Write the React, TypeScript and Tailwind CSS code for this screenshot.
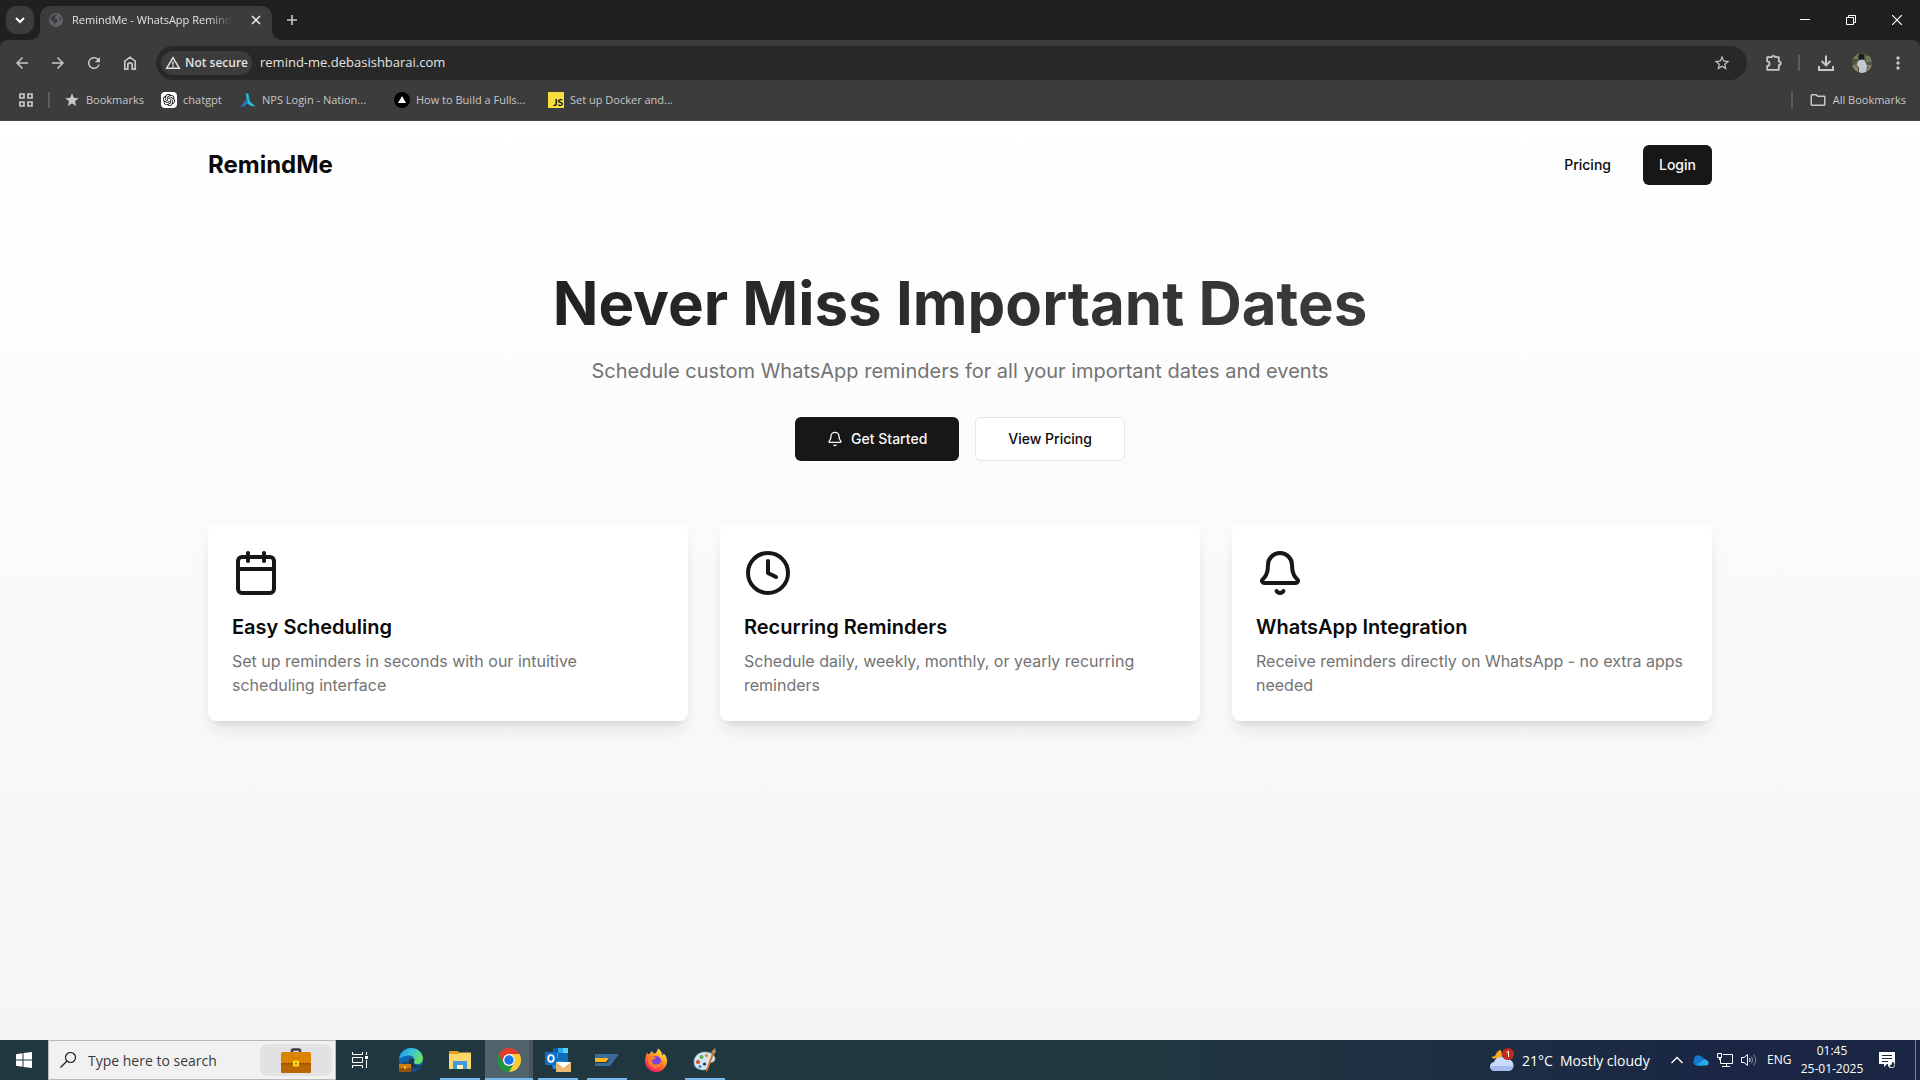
import type { ReactNode } from "react";
import { Bell, Calendar, Clock } from "lucide-react";
import {
  MdArrowBack,
  MdArrowForward,
  MdMoreVert,
  MdOutlineFolder,
  MdRefresh,
  MdStar,
  MdStarOutline,
} from "react-icons/md";
import { SiOpenai } from "react-icons/si";

const features = [
  {
    icon: Calendar,
    title: "Easy Scheduling",
    text: "Set up reminders in seconds with our intuitive scheduling interface",
  },
  {
    icon: Clock,
    title: "Recurring Reminders",
    text: "Schedule daily, weekly, monthly, or yearly recurring reminders",
  },
  {
    icon: Bell,
    title: "WhatsApp Integration",
    text: "Receive reminders directly on WhatsApp - no extra apps needed",
  },
];

/* ---------- browser icons ---------- */

const GlobeIcon = () => (
  <svg viewBox="0 0 16 16" className="size-4 shrink-0">
    <circle cx="8" cy="8" r="7" fill="#5f6368" />
    <path d="M2.4 6.2 C4 3 7 2.2 9 2.6 C8.6 4.2 7.2 4.4 7 5.6 C6.8 7 9.6 6.8 9.8 8.4 C9.8 10 7.6 9.6 7.4 11.2 C7.2 12.4 6 13 5.6 13 C6 11 5.6 9.6 4.2 9 C3 8.4 2.2 7.6 2.4 6.2Z" fill="#3c3c3c" />
    <path d="M10.8 4.4 L13 6 L13.4 8.4 L11.6 7.4Z" fill="#3c3c3c" />
  </svg>
);

const HomeIcon = () => (
  <svg viewBox="0 0 16 16" className="size-4" fill="none" stroke="currentColor" strokeWidth="1.7">
    <path d="M2.8 6.2 L8 2.2 L13.2 6.2 V14.2 H10.2 V10 A2.2 2.2 0 0 0 5.8 10 V14.2 H2.8Z" />
  </svg>
);

const WarningIcon = () => (
  <svg viewBox="0 0 16 16" className="size-4" fill="none" stroke="currentColor" strokeWidth="1.4">
    <path d="M8 2.6 L14.4 13.3 H1.6Z" />
    <path d="M8 6.4 V9.8 M8 10.6 V12" />
  </svg>
);

const PuzzleIcon = () => (
  <svg viewBox="0 0 20 20" className="size-5" fill="none" stroke="currentColor" strokeWidth="1.8" strokeLinejoin="round">
    <path d="M3.2 4.2 H7.6 A2 1.8 0 0 1 11.4 4.2 H14.8 V8.4 A1.9 1.9 0 0 1 14.8 12.2 V16.8 H3.2 V13 A2.2 2.2 0 0 0 3.2 8.4Z" />
  </svg>
);

const DownloadIcon = () => (
  <svg viewBox="0 0 20 20" className="size-5" fill="none" stroke="currentColor" strokeWidth="2">
    <path d="M10 2.5 V12 M5.6 8 L10 12.4 L14.4 8" />
    <path d="M3 13 V17 H17 V13" />
  </svg>
);

const AppsIcon = () => (
  <svg viewBox="0 0 16 16" className="size-4" fill="none" stroke="currentColor" strokeWidth="1.7">
    <path d="M2 2h4v4h-4z M10 2h4v4h-4z M2 10h4v4h-4z M10 10h4v4h-4z" />
  </svg>
);

const AvatarIcon = () => (
  <svg viewBox="0 0 20 20" className="size-5">
    <defs>
      <clipPath id="avatar">
        <circle cx="10" cy="10" r="10" />
      </clipPath>
    </defs>
    <g clipPath="url(#avatar)">
      <path d="M0 0h20v20H0z" fill="#4c5640" />
      <path d="M0 0h7v6H0z M14 3h6v6h-6z" fill="#6f7a58" />
      <path d="M0 12h6v8H0z M15 12h5v8h-5z" fill="#8b8272" />
      <path d="M6 8 Q10 5 13 8 L15 13 L14 20 H7 L7 14 L4 13Z" fill="#c3c9d3" />
      <path d="M6 3 Q9 -1 12 2 L12 6 L7 7Z" fill="#1d1a1a" />
      <path d="M3 10 L6 13 L5 15 L2 12Z M15 12 L17 15 L15 16Z" fill="#8a5f4a" />
    </g>
  </svg>
);

/* ---------- bookmarks ---------- */

const bookmarks: { label: string; width: string; icon: ReactNode }[] = [
  { label: "Bookmarks", width: "w-[59px]", icon: <MdStar className="size-4" /> },
  {
    label: "chatgpt",
    width: "w-[41px]",
    icon: (
      <span className="flex size-4 items-center justify-center rounded-sm bg-white text-black">
        <SiOpenai className="size-3" />
      </span>
    ),
  },
  {
    label: "NPS Login - Nation...",
    width: "w-[116px]",
    icon: (
      <svg viewBox="0 0 16 16" className="size-4">
        <path d="M5.5 1 L8.4 2 L10.4 11 L7 9Z" fill="#29b6d8" />
        <path d="M6.6 7 L8.6 10 L4.4 14.4 L0.4 14.4Z" fill="#2c6fc4" />
        <path d="M8.6 8.6 L15.6 14.4 L11 14 L7 11Z" fill="#1fc2d6" />
      </svg>
    ),
  },
  {
    label: "How to Build a Fulls...",
    width: "w-[116px]",
    icon: (
      <svg viewBox="0 0 16 16" className="size-4">
        <circle cx="8" cy="8" r="8" fill="#000" />
        <path d="M8 4 L12 11 H4Z" fill="#fff" />
      </svg>
    ),
  },
  {
    label: "Set up Docker and...",
    width: "w-[116px]",
    icon: (
      <span className="flex size-4 items-end justify-end bg-[#f7df3e] pr-px font-[Lato,sans-serif] text-[10px] leading-[11px] font-bold text-black">
        JS
      </span>
    ),
  },
];

const Browser = () => (
  <div className="bg-[#1f2120] font-['Open_Sans',sans-serif] text-[#c7c7c7]">
    <div className="flex h-10 items-center pl-1.5">
      <button type="button" aria-label="Search tabs" className="flex size-7 items-center justify-center rounded-[10px] bg-[#3c3c3c] text-white">
        <svg viewBox="0 0 10 10" className="size-2.5" fill="none" stroke="currentColor" strokeWidth="2">
          <path d="M1 3 L5 7 L9 3" />
        </svg>
      </button>
      <div className="relative ml-1.5 flex h-[34px] w-[232px] items-center self-end rounded-t-[10px] bg-[#3c3c3c] pr-2 pb-1.5 pl-2">
        <span className="absolute bottom-0 -left-2.5 size-2.5 bg-[radial-gradient(circle_at_top_left,#1f2120_10px,#3c3c3c_10px)]" />
        <span className="absolute -right-2.5 bottom-0 size-2.5 bg-[radial-gradient(circle_at_top_right,#1f2120_10px,#3c3c3c_10px)]" />
        <GlobeIcon />
        <span className="ml-2 mask-r-from-85% text-[11px] whitespace-nowrap text-[#e3e3e3]">
          RemindMe - WhatsApp Remind
        </span>
        <button type="button" aria-label="Close tab" className="ml-auto flex size-4 items-center justify-center text-[#e3e3e3]">
          <svg viewBox="0 0 10 10" className="size-2.5" stroke="currentColor" strokeWidth="1.6">
            <path d="M1 1 L9 9 M9 1 L1 9" />
          </svg>
        </button>
      </div>
      <button type="button" aria-label="New tab" className="ml-3 flex size-4 items-center justify-center">
        <svg viewBox="0 0 10 10" className="size-2.5" stroke="currentColor" strokeWidth="1.6">
          <path d="M5 0 V10 M0 5 H10" />
        </svg>
      </button>
      <div className="ml-auto flex text-white">
        <button type="button" aria-label="Minimize" className="flex h-8 w-[46px] items-center justify-center">
          <svg viewBox="0 0 10 10" className="size-2.5" stroke="currentColor">
            <path d="M0 4.5 H10" />
          </svg>
        </button>
        <button type="button" aria-label="Restore" className="flex h-8 w-[46px] items-center justify-center">
          <svg viewBox="0 0 10 10" className="size-2.5" fill="none" stroke="currentColor">
            <path d="M0.5 2.5 H7.5 V9.5 H0.5Z M2.5 2.5 V0.5 H9.5 V7.5 H7.5" />
          </svg>
        </button>
        <button type="button" aria-label="Close" className="flex h-8 w-[46px] items-center justify-center">
          <svg viewBox="0 0 10 10" className="size-2.5" stroke="currentColor" strokeWidth="1.2">
            <path d="M0 0 L10 10 M10 0 L0 10" />
          </svg>
        </button>
      </div>
    </div>

    <div className="rounded-t-lg border-b border-[#474747] bg-[#3c3c3c]">
      <div className="flex h-[46px] items-center pr-3 pl-[13px]">
        <div className="flex gap-[18px]">
          <button type="button" aria-label="Back"><MdArrowBack className="size-[18px]" /></button>
          <button type="button" aria-label="Forward"><MdArrowForward className="size-[18px]" /></button>
          <button type="button" aria-label="Reload"><MdRefresh className="size-[18px]" /></button>
          <button type="button" aria-label="Home" className="flex size-[18px] items-center justify-center"><HomeIcon /></button>
        </div>
        <div className="ml-[17px] flex h-[34px] flex-1 items-center rounded-full bg-[#282828] pr-4 pl-[5px]">
          <button type="button" className="flex h-6 w-[91px] items-center gap-1 rounded-full bg-[#3c3c3c] pl-1 text-[12px] font-semibold whitespace-nowrap text-[#e3e3e3]">
            <WarningIcon />
            Not secure
          </button>
          <input
            type="text"
            aria-label="Address"
            defaultValue="remind-me.debasishbarai.com"
            className="ml-2 min-w-0 flex-1 bg-transparent text-[13px] text-[#e3e3e3] outline-none"
          />
          <button type="button" aria-label="Bookmark this page"><MdStarOutline className="size-[18px]" /></button>
        </div>
        <div className="ml-[17px] flex items-center">
          <button type="button" aria-label="Extensions"><PuzzleIcon /></button>
          <span className="mr-4 ml-3.5 h-4 w-0.5 bg-[#5c5c5c]" />
          <button type="button" aria-label="Downloads"><DownloadIcon /></button>
          <button type="button" aria-label="Profile" className="ml-4"><AvatarIcon /></button>
          <button type="button" aria-label="Menu" className="ml-4"><MdMoreVert className="size-5" /></button>
        </div>
      </div>
      <nav aria-label="Bookmarks bar" className="flex h-[34px] items-center pr-3.5 pb-[6px] pl-[18px] text-[11px]">
        <button type="button" aria-label="Apps"><AppsIcon /></button>
        <span className="ml-3.5 h-4 w-0.5 bg-[#5c5c5c]" />
        <div className="ml-3.5 flex gap-4">
          {bookmarks.map((b) => (
            <a key={b.label} href="#" className="flex items-center gap-1.5">
              {b.icon}
              <span className={`${b.width} whitespace-nowrap`}>{b.label}</span>
            </a>
          ))}
        </div>
        <span className="ml-auto h-4 w-0.5 bg-[#5c5c5c]" />
        <a href="#" className="ml-4 flex items-center gap-1.5">
          <MdOutlineFolder className="size-[18px]" />
          All Bookmarks
        </a>
      </nav>
    </div>
  </div>
);

/* ---------- landing page ---------- */

const Landing = () => (
  <div className="flex-1 bg-linear-to-b from-white to-[#f5f5f5] font-[Inter,sans-serif] text-[#0a0a0a]">
    <div className="mx-auto max-w-[1536px] px-4">
      <header className="flex items-center justify-between py-6">
        <a href="#" className="text-2xl font-bold">RemindMe</a>
        <div className="flex items-center gap-8">
          <a href="#" className="text-sm font-medium">Pricing</a>
          <button type="button" className="h-10 rounded-md bg-[#171717] px-4 text-sm font-medium text-[#fafafa]">
            Login
          </button>
        </div>
      </header>

      <main className="py-16">
        <div className="text-center">
          <h1 className="mb-6 bg-linear-to-r from-[#171717] to-[#171717]/80 bg-clip-text text-6xl font-bold text-transparent">
            Never Miss Important Dates
          </h1>
          <p className="mb-8 text-xl text-[#737373]">
            Schedule custom WhatsApp reminders for all your important dates and events
          </p>
          <div className="flex justify-center gap-4">
            <button type="button" className="flex h-11 items-center gap-2 rounded-md bg-[#171717] px-8 text-sm font-medium text-[#fafafa]">
              <Bell className="size-4" />
              Get Started
            </button>
            <button type="button" className="h-11 rounded-md border border-[#e5e5e5] bg-white px-8 text-sm font-medium">
              View Pricing
            </button>
          </div>
        </div>

        <div className="mt-16 grid grid-cols-3 gap-8">
          {features.map(({ icon: Icon, title, text }) => (
            <div key={title} className="rounded-lg bg-white p-6 shadow-lg">
              <Icon className="mb-4 size-12 text-[#171717]" />
              <h2 className="mb-2 text-xl font-semibold">{title}</h2>
              <p className="text-base text-[#737373]">{text}</p>
            </div>
          ))}
        </div>
      </main>
    </div>
  </div>
);

/* ---------- taskbar ---------- */

const EdgeIcon = () => (
  <svg viewBox="0 0 24 24" className="size-6">
    <defs>
      <linearGradient id="edge-top" x1="0" y1="0" x2="1" y2="0.4">
        <stop offset="0" stopColor="#1b8fe0" />
        <stop offset="0.5" stopColor="#35c1e0" />
        <stop offset="1" stopColor="#6be06a" />
      </linearGradient>
    </defs>
    <circle cx="12" cy="12" r="12" fill="#1066ae" />
    <path d="M0 11 C1 4 6 0 12 0 C19 0 24 5 24 10.5 C24 14 21.5 16 18.5 16 C16 16 14.6 15 15 14 C16.8 11 14 7.6 10 7.6 C5.5 7.6 1.5 10 0 11Z" fill="url(#edge-top)" />
    <path d="M9.6 14 C9.6 17.5 13 20 17 20 C19.5 20 21.5 19 22.8 18.4 C20 22.6 16 24 12.6 23.8 C8 22.6 6.6 16.4 10.4 12.4 C9.8 12.8 9.6 13.4 9.6 14Z" fill="#154b86" />
    <path d="M13 10.6 C11 10.6 9.6 12 9.6 14 C9.6 17.5 13 20 17 20 C19.5 20 21.5 19 22.8 18.4 C24 17 23 16.6 21.8 17.2 C18 18.4 14 16.6 15 14 C15.6 12.8 14.8 10.8 13 10.6Z" fill="#223840" />
    <path d="M0 16h12v8H0z" fill="#d07c10" />
    <path d="M0 20h12v4H0z" fill="#9a5206" />
    <path d="M4 16v-1.4h4V16" fill="none" stroke="#3a2c1c" />
    <path d="M5 18.6h2v2H5z" fill="#ffd83a" />
  </svg>
);

const ExplorerIcon = () => (
  <svg viewBox="0 0 24 24" className="size-6">
    <path d="M1 3h9l2 2.5h11V21H1z" fill="#e0a01c" />
    <path d="M1 6h9l2-1.5h11V21H1z" fill="#fcd66a" />
    <path d="M5 13h14v8h-4v-4H9v4H5z" fill="#3f9bdc" />
    <path d="M9 17h6v4H9z" fill="#fff0b8" />
  </svg>
);

const ChromeIcon = () => (
  <svg viewBox="0 0 48 48" className="size-6">
    <circle cx="24" cy="24" r="24" fill="#229342" />
    <path d="M44.8 12 A24 24 0 0 1 24 48 L34.4 30 A12 12 0 0 0 34.4 18 L24 12Z" fill="#fcc934" />
    <path d="M3.2 12 L13.6 30 A12 12 0 0 1 24 12 H44.8 A24 24 0 0 0 3.2 12Z" fill="#e33b2e" />
    <circle cx="24" cy="24" r="12" fill="#fff" />
    <circle cx="24" cy="24" r="9.4" fill="#1a73e8" />
  </svg>
);

const OutlookIcon = () => (
  <svg viewBox="0 0 26 26" className="size-[26px]">
    <path d="M8 1h15v14H8z" fill="#0f6cbd" />
    <path d="M8 1h5v5H8z" fill="#0a5aa8" />
    <path d="M13 1h5v5h-5z M8 6h5v5H8z" fill="#28a8ea" />
    <path d="M18 1h5v5h-5z" fill="#50d9ff" />
    <path d="M6 14h12v8H8z" fill="#1490df" />
    <rect x="0" y="5" width="12" height="13" rx="1" fill="#0a70c8" />
    <ellipse cx="6" cy="11.5" rx="2.8" ry="3.3" fill="none" stroke="#fff" strokeWidth="1.7" />
    <path d="M11 15h15v10H11z" fill="#e9b872" />
    <path d="M11 15h15l-7.5 6z" fill="#fff" />
  </svg>
);

const RemoteIcon = () => (
  <svg viewBox="0 0 24 12" className="h-3 w-6">
    <path d="M0 0h24l-9 12H0V9h12l3-5H0z" fill="#386c9f" />
    <path d="M0 4h14l-3 4H0z" fill="#fdb515" />
  </svg>
);

const FirefoxIcon = () => (
  <svg viewBox="0 0 24 24" className="size-6">
    <defs>
      <linearGradient id="fox" x1="0.8" y1="0" x2="0.2" y2="1">
        <stop offset="0" stopColor="#fff04a" />
        <stop offset="0.4" stopColor="#ff9a26" />
        <stop offset="0.75" stopColor="#ff3b47" />
        <stop offset="1" stopColor="#e31587" />
      </linearGradient>
    </defs>
    <path d="M3.2 4.5 C3.5 5.5 4 6 5 6.5 C6.5 5 7.2 4 7.5 3 C8.5 3.8 9 4.8 10 5.5 C12 5.5 13 4 14 0.5 C17 2.5 18 5 18.5 7.5 C19.5 7 19.6 6 19.5 5 C22 7.5 23 10 23 13 A11 11 0 0 1 1 13 C1 9.5 2 7 3.2 4.5Z" fill="url(#fox)" />
    <circle cx="12" cy="13" r="5" fill="#7543e5" />
    <path d="M4 9 C7 7 10 8 12 10 C11 11.5 9 11 8 12.5 C8 15 10 17 13 16.5 C16 16 17.5 14 17 11 C20 15 17 20.5 11.5 20.5 C6 20.5 3 15 4 9Z" fill="#ff7a2a" />
  </svg>
);

const PaintIcon = () => (
  <svg viewBox="0 0 24 24" className="size-6">
    <path d="M1 14 C1 8 6 4 12 4 C18 4 22 7 22 11 C22 14 19 14 17 15 C15 16 16 18 15 20 C13 22 10 22.5 7 21.5 C3 20.5 1 18 1 14Z" fill="#d3e5f1" stroke="#8fb2c8" strokeWidth="0.6" />
    <circle cx="5" cy="14" r="2" fill="#d9482b" />
    <circle cx="8.5" cy="9" r="2" fill="#58b24a" />
    <circle cx="13.5" cy="7.5" r="1.8" fill="#ef9330" />
    <circle cx="7" cy="18.5" r="1.6" fill="#3c88d6" />
    <circle cx="11.5" cy="16" r="1.6" fill="#223840" />
    <path d="M19 5 L21 6 L14.5 23 L12.5 23.5Z" fill="#d9731f" />
    <path d="M18 4 L22 0 L23 4 L21 6.5Z" fill="#b98a5c" />
  </svg>
);

const TaskViewIcon = () => (
  <svg viewBox="0 0 16 16" className="size-4" fill="none" stroke="#fff">
    <path d="M0.5 0 V2.5 H10.5 V0 M0.5 5.5 H10.5 V10.5 H0.5Z M0.5 16 V13.5 H10.5 V16 M14.5 0 V3 M14.5 8 V16" />
    <path d="M13 4h3v3h-3z" fill="#fff" stroke="none" />
  </svg>
);

const apps = [
  { name: "Microsoft Edge", icon: <EdgeIcon />, style: "" },
  { name: "File Explorer", icon: <ExplorerIcon />, style: "", bar: "w-10" },
  { name: "Google Chrome", icon: <ChromeIcon />, style: "bg-[#50626a] shadow-[inset_-4px_0_#47555c]", bar: "w-12" },
  { name: "Outlook", icon: <OutlookIcon />, style: "", bar: "w-10" },
  { name: "Remote client", icon: <RemoteIcon />, style: "", bar: "w-10" },
  { name: "Firefox", icon: <FirefoxIcon />, style: "" },
  { name: "Paint", icon: <PaintIcon />, style: "", bar: "w-10" },
];

const Taskbar = () => (
  <footer className="flex h-10 items-stretch bg-linear-to-r from-[#213740] from-60% to-[#1a2644] to-90% font-['Open_Sans',sans-serif] text-white">
    <button type="button" aria-label="Start" className="flex w-12 items-center justify-center">
      <svg viewBox="0 0 16 16" className="size-4" fill="#fff">
        <path d="M0 2.3 L6.5 1.3 V7.5 H0Z M7.5 1.1 L16 0 V7.5 H7.5Z M0 8.5 H6.5 V14.7 L0 13.7Z M7.5 8.5 H16 V16 L7.5 14.9Z" />
      </svg>
    </button>
    <label className="flex w-72 items-center border border-[#b9b9b9] bg-[#f1f1f1] pr-[3px] pl-[11px]">
      <svg viewBox="0 0 16 16" className="size-4 shrink-0" fill="none" stroke="#222" strokeWidth="1.2">
        <circle cx="10.5" cy="5.5" r="5" />
        <path d="M7 9 L0.5 15.5" />
      </svg>
      <input
        type="text"
        aria-label="Search"
        placeholder="Type here to search"
        className="ml-3 min-w-0 flex-1 bg-transparent text-[14px] outline-none placeholder:text-[#3a3a3a]"
      />
      <span className="flex h-8 w-[72px] items-center justify-center rounded-lg bg-[#e2e2e2]">
        <svg viewBox="0 0 30 25" className="h-[25px] w-[30px]">
          <path d="M11 4 V2.5 Q11 1.5 12.5 1.5 H17.5 Q19 1.5 19 2.5 V4" fill="none" stroke="#3d3d42" strokeWidth="2.5" />
          <rect y="4" width="30" height="21" rx="1.5" fill="#db8304" />
          <path d="M0 16h30v7.5q0 1.5-1.5 1.5h-27q-1.5 0-1.5-1.5z" fill="#b86705" />
          <path d="M0 15h30v1.5H0z" fill="#9c5604" />
          <rect x="12" y="12.5" width="6" height="6" rx="1" fill="#ffd91c" />
          <path d="M14 14.5h2v2h-2z" fill="#c08a00" />
        </svg>
      </span>
    </label>
    <button type="button" aria-label="Task view" className="mr-[3px] flex w-12 items-center justify-center">
      <TaskViewIcon />
    </button>
    <div className="flex gap-px">
      {apps.map(({ name, icon, style, bar }) => (
        <button key={name} type="button" aria-label={name} className={`relative flex w-12 items-center justify-center ${style}`}>
          {icon}
          {bar && <span className={`absolute bottom-0 left-1/2 h-0.5 -translate-x-1/2 bg-[#76b9ed] ${bar}`} />}
        </button>
      ))}
    </div>

    <div className="ml-auto flex items-center">
      <button type="button" className="flex items-center text-[14px] whitespace-nowrap">
        <svg viewBox="0 0 24 24" className="size-6">
          <path d="M10 1 Q11 7 4 11 L1 9 Q8 8 10 1Z" fill="#f7a823" />
          <path d="M5 10 Q5 4 11 2 L13 12Z" fill="#f7a823" />
          <path d="M5 23 A4.5 4.5 0 0 1 4 14 A7 7 0 0 1 16 11.5 A5.6 5.6 0 0 1 19 23Z" fill="#c9dbf8" />
          <path d="M5 23 A4.5 4.5 0 0 1 0.5 18 H23.5 Q23 22 19 23Z" fill="#a4bdee" />
          <circle cx="18" cy="6" r="6" fill="#c42b1c" />
          <path d="M16.5 4.5 L18.5 3.2 V9" fill="none" stroke="#fff" />
        </svg>
        <span className="ml-2 w-[38px] text-left">21°C</span>
        <span className="w-[89px] text-left">Mostly cloudy</span>
      </button>
      <button type="button" aria-label="Show hidden icons" className="ml-[22px] flex">
        <svg viewBox="0 0 12 12" className="size-3" fill="none" stroke="#fff" strokeWidth="1.3">
          <path d="M0.5 9 L6 3.5 L11.5 9" />
        </svg>
      </button>
      <svg viewBox="0 0 16 16" className="ml-2.5 size-4">
        <path d="M1 8 A4.5 4.5 0 0 1 9 5 L15 9 L10 13.5 H3.5 A3.5 3.5 0 0 1 1 8Z" fill="#1279cf" />
        <path d="M3 13.5 L9.5 8.5 A3.4 3.4 0 0 1 14 8.5 A2.6 2.6 0 0 1 13.5 13.5Z" fill="#29a9ea" />
      </svg>
      <svg viewBox="0 0 16 16" className="ml-2 size-4" fill="none" stroke="#fff">
        <path d="M0.5 1.5 H4.5 V5.5 H0.5Z M6 2.5 H15.5 V11.5 H3.5 V6 M2.5 5.5 V8 M9.5 11.5 V14.5 M5 14.5 H13" />
      </svg>
      <svg viewBox="0 0 16 16" className="ml-2 size-4" fill="none" stroke="#fff">
        <path d="M0.5 5.5 H3 L6.5 2.5 V13.5 L3 10.5 H0.5Z M8.5 6 Q10 8 8.5 10" />
        <path d="M10.5 4.5 Q13 8 10.5 11.5 M12.5 2.5 Q17 8 12.5 13.5" stroke="#7f8799" />
      </svg>
      <span className="ml-2.5 w-6 text-[12px]">ENG</span>
      <div className="ml-2 w-[66px] text-center text-[12px] leading-[18px] whitespace-nowrap">
        <div>01:45</div>
        <div>25-01-2025</div>
      </div>
      <button type="button" aria-label="Notifications" className="ml-3.5 flex">
        <svg viewBox="0 0 16 16" className="size-4">
          <path d="M0 0h16v12H8l-3 3v-3H0z" fill="#fff" />
          <path d="M3 3.5h10 M3 6.5h10 M3 9.5h6" stroke="#1a2644" />
          <circle cx="12.5" cy="12.5" r="3.5" fill="#fff" />
          <path d="M13 10 A2.6 2.6 0 1 1 10.5 13.5 A3 3 0 0 0 13 10Z" fill="#1a2644" />
        </svg>
      </button>
      <span className="mr-1 ml-5 h-10 w-px bg-[#7b8598]" />
    </div>
  </footer>
);

export default function App() {
  return (
    <div className="flex min-h-screen flex-col">
      <Browser />
      <Landing />
      <Taskbar />
    </div>
  );
}
